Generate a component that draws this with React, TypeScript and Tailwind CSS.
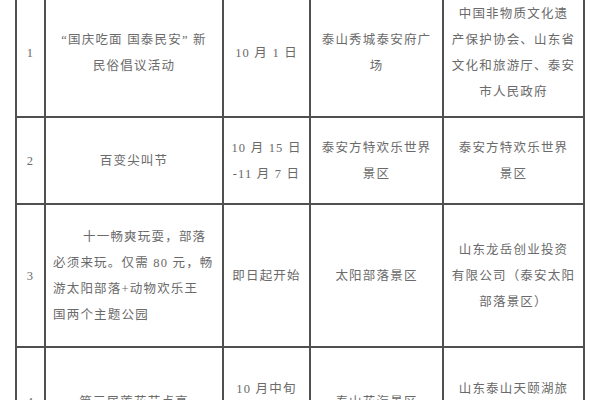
const ROWS: { no: string; name: string[]; indent?: boolean; time: string[]; place: string[]; org: string[] }[] = [
  {
    no: "1",
    name: ["“国庆吃面 国泰民安” 新", "民俗倡议活动"],
    time: ["10 月 1 日"],
    place: ["泰山秀城泰安府广", "场"],
    org: ["中国非物质文化遗", "产保护协会、山东省", "文化和旅游厅、泰安", "市人民政府"],
  },
  {
    no: "2",
    name: ["百变尖叫节"],
    time: ["10 月 15 日", "-11 月 7 日"],
    place: ["泰安方特欢乐世界", "景区"],
    org: ["泰安方特欢乐世界", "景区"],
  },
  {
    no: "3",
    name: ["十一畅爽玩耍，部落", "必须来玩。仅需 80 元，畅", "游太阳部落+动物欢乐王", "国两个主题公园"],
    indent: true,
    time: ["即日起开始"],
    place: ["太阳部落景区"],
    org: ["山东龙岳创业投资", "有限公司（泰安太阳", "部落景区）"],
  },
  {
    no: "4",
    name: ["第三届莲花节点亮"],
    time: ["10 月中旬", "-11 月"],
    place: ["泰山花海景区"],
    org: ["山东泰山天颐湖旅", "游开发有限公司"],
  },
];

function Cell({ lines, left, indent }: { lines: string[]; left?: boolean; indent?: boolean }) {
  return (
    <div className={left ? "bg-white flex flex-col justify-center pl-[7px] text-left" : "bg-white flex flex-col items-center justify-center text-center"}>
      {lines.map((l, i) => (
        <div key={i} className={indent && i === 0 ? "pl-[30px] whitespace-nowrap" : "whitespace-nowrap"}>
          {l}
        </div>
      ))}
    </div>
  );
}

export default function App() {
  return (
    <div className="w-[600px] h-[400px] overflow-hidden bg-white">
      <div
        className="-mt-[12px] ml-[15px] w-[570px] p-[2px] bg-[#505050] grid grid-cols-[27px_176px_85px_131px_139px] grid-rows-[126px_85px_141px_108px] gap-[2px] text-[12.5px] tracking-[1.2px] leading-[26px] text-[#6a6a6a]"
        style={{ fontFamily: "'Liberation Serif', 'Noto Sans CJK SC', serif" }}
      >
        {ROWS.map((r) => (
          <>
            <Cell key={r.no + "a"} lines={[r.no]} />
            <Cell key={r.no + "b"} lines={r.name} left={r.indent} indent={r.indent} />
            <Cell key={r.no + "c"} lines={r.time} />
            <Cell key={r.no + "d"} lines={r.place} />
            <Cell key={r.no + "e"} lines={r.org} />
          </>
        ))}
      </div>
    </div>
  );
}
